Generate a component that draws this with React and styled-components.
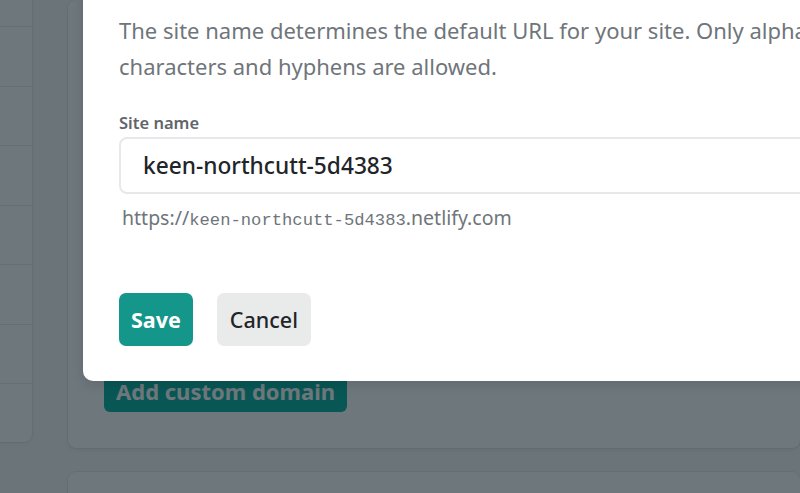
import React from 'react';
import styled, { createGlobalStyle } from 'styled-components';

const GlobalStyle = createGlobalStyle`
  html, body {
    margin: 0;
    padding: 0;
    width: 800px;
    height: 493px;
    overflow: hidden;
    background: #f6f6f7;
  }
  * { box-sizing: border-box; }
`;

const SANS = `"Noto Sans", "Open Sans", sans-serif`;

const Page = styled.div`
  position: relative;
  width: 800px;
  height: 493px;
  overflow: hidden;
  background: #f6f6f7;
  font-family: ${SANS};
`;

const Columns = styled.div`
  display: flex;
  align-items: flex-start;
  gap: 36px;
  margin-left: -200px;
`;

const SideNav = styled.div`
  width: 232px;
  background: #fff;
  border-radius: 0 0 8px 8px;
  box-shadow: 0 0 0 1px rgba(0, 0, 0, 0.05), 0 2px 4px rgba(0, 0, 0, 0.05);
  display: flex;
  flex-direction: column;
  padding-bottom: 58px;
`;

const NavRow = styled.div`
  height: ${p => p.h || 59.5}px;
  border-bottom: 1px solid #e9ebeb;
`;

const Main = styled.div`
  flex: 1;
  display: flex;
  flex-direction: column;
  gap: 24px;
`;

const Card = styled.div`
  background: #fff;
  border-radius: 8px;
  box-shadow: 0 0 0 1px rgba(0, 0, 0, 0.05), 0 2px 4px rgba(0, 0, 0, 0.06);
  height: ${p => p.h}px;
  padding: 370px 36px 0;
`;

const GhostButton = styled.div`
  display: inline-block;
  background: #00ad9f;
  color: #fff;
  font-weight: 700;
  font-size: 22px;
  line-height: 42px;
  height: 42px;
  padding: 0 12px;
  border-radius: 6px;
`;

const Overlay = styled.div`
  position: absolute;
  inset: 0;
  background: rgba(14, 30, 37, 0.6);
`;

const Modal = styled.div`
  position: absolute;
  left: 83px;
  top: -24px;
  width: 1000px;
  background: #fff;
  border-radius: 10px;
  box-shadow: 0 4px 12px rgba(0, 0, 0, 0.12);
  padding: 36px 36px 35px;
`;

const Description = styled.p`
  margin: 0;
  font-size: 22px;
  line-height: 36px;
  color: #6f757b;
  white-space: nowrap;
`;

const Label = styled.label`
  display: block;
  margin-top: 29px;
  font-size: 16.5px;
  line-height: 20px;
  font-weight: 600;
  color: #5f656b;
`;

const Input = styled.div`
  margin-top: 4px;
  height: 57px;
  border: 2px solid #e6e8e9;
  border-radius: 8px;
  padding: 0 22px;
  display: flex;
  align-items: center;
  font-size: 22.7px;
  font-weight: 500;
  color: #1f2529;
`;

const Hint = styled.div`
  margin-top: 12px;
  padding-left: 3px;
  height: 24px;
  display: flex;
  align-items: baseline;
  font-size: 19.5px;
  line-height: 24px;
  color: #6f757b;
  white-space: pre;
`;

const Mono = styled.span`
  font-family: "Liberation Mono", monospace;
  font-size: 17.2px;
  line-height: 24px;
`;

const Actions = styled.div`
  margin-top: 63px;
  display: flex;
  gap: 24px;
`;

const Button = styled.button`
  height: 53px;
  padding: 0 ${p => (p.primary ? 12 : 13)}px;
  border: none;
  border-radius: 7px;
  font-family: ${SANS};
  font-size: 21.5px;
  font-weight: ${p => (p.primary ? 700 : 500)};
  background: ${p => (p.primary ? '#15968b' : '#e9ebeb')};
  color: ${p => (p.primary ? '#fff' : '#1f2529')};
`;

export default function App() {
  return (
    <>
      <GlobalStyle />
      <Page>
        <Columns>
          <SideNav>
            <NavRow h={27} />
            <NavRow />
            <NavRow />
            <NavRow />
            <NavRow />
            <NavRow />
            <NavRow />
          </SideNav>
          <Main>
            <Card h={448}>
              <GhostButton>Add custom domain</GhostButton>
            </Card>
            <Card h={200} />
          </Main>
        </Columns>
        <Overlay />
        <Modal>
          <Description>
            The site name determines the default URL for your site. Only alphanumeric
            <br />
            characters and hyphens are allowed.
          </Description>
          <Label>Site name</Label>
          <Input>keen-northcutt-5d4383</Input>
          <Hint>
            <span>https://</span>
            <Mono>keen-northcutt-5d4383</Mono>
            <span>.netlify.com</span>
          </Hint>
          <Actions>
            <Button primary>Save</Button>
            <Button>Cancel</Button>
          </Actions>
        </Modal>
      </Page>
    </>
  );
}
